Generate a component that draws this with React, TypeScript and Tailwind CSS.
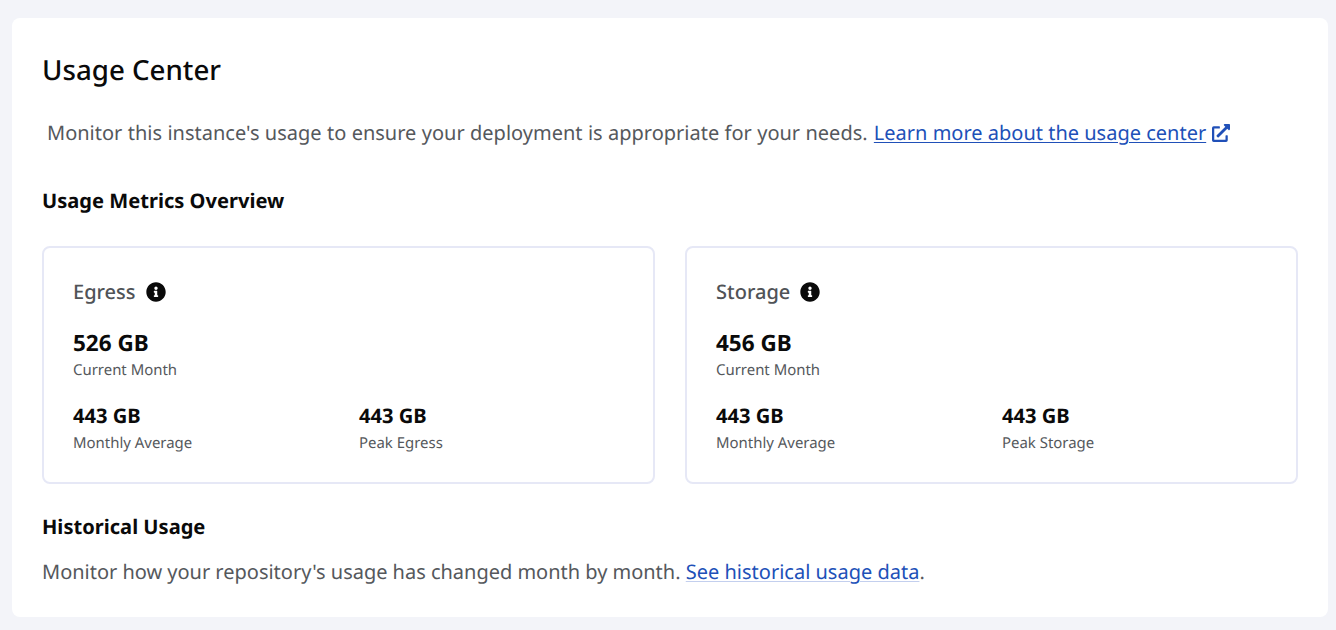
import { FaInfoCircle, FaExternalLinkAlt } from "react-icons/fa";

function Stat({ value, label, big, wide }: { value: string; label: string; big?: boolean; wide?: boolean }) {
  return (
    <div className="flex flex-col">
      <div className={big ? "text-[22.5px] leading-[30px] font-bold text-[#0a0a0a]" : "text-[20.1px] leading-[28px] font-bold text-[#0a0a0a]"}>{value}</div>
      <div className={wide ? "text-[14.95px] leading-[26px] text-[#55585c]" : "text-[14.95px] leading-[24px] text-[#55585c]"}>{label}</div>
    </div>
  );
}

function Card({ title, current, peak }: { title: string; current: string; peak: string }) {
  return (
    <div className="flex-1 h-[238px] rounded-lg border-2 border-[#e6e8f6] pl-[29px] pr-6 pt-[29px]">
      <div className="flex items-center gap-[10px] h-[30px]">
        <span className="text-[20px] leading-[30px] font-medium text-[#505357]">{title}</span>
        <FaInfoCircle className="w-[20px] h-[20px] text-[#0a0a0a]" />
      </div>
      <div className="mt-[21px]">
        <Stat value={current} label="Current Month" big />
      </div>
      <div className="mt-[20px] grid grid-cols-[286px_1fr]">
        <Stat value="443 GB" label="Monthly Average" wide />
        <Stat value="443 GB" label={peak} wide />
      </div>
    </div>
  );
}

export default function App() {
  return (
    <div className="min-h-[630px] bg-[#f3f4f9] pl-3 pr-2 pt-[18px] pb-[13px] font-['Noto_Sans','Open_Sans',sans-serif] [text-rendering:geometricPrecision]">
      <div className="h-[599px] rounded-lg bg-white px-[30px] pt-[32px]">
        <h1 className="text-[27.7px] leading-[40px] font-medium text-[#0a0a0a]">Usage Center</h1>
        <p className="mt-[29px] pl-[5px] text-[20px] leading-[28px] text-[#55585c]">
          <span className="[word-spacing:0.17px]">Monitor this instance's usage to ensure your deployment is appropriate for your needs.</span>{" "}
          <a className="ml-[1px] text-[#2050b8] underline decoration-1 underline-offset-2 decoration-[#2050b8]" href="#">
            Learn more about the usage center
            <FaExternalLinkAlt className="inline-block ml-[6px] w-[18px] h-[18px] align-[-2px]" />
          </a>
        </p>
        <h2 className="mt-[39px] text-[20.1px] leading-[30px] font-bold text-[#0a0a0a]">Usage Metrics Overview</h2>
        <div className="mt-[30px] flex gap-[30px]">
          <Card title="Egress" current="526 GB" peak="Peak Egress" />
          <Card title="Storage" current="456 GB" peak="Peak Storage" />
        </div>
        <h2 className="mt-[28px] text-[20.1px] leading-[30px] font-bold text-[#0a0a0a]">Historical Usage</h2>
        <p className="mt-[16px] text-[20px] leading-[28px] text-[#55585c]">
          <span className="[word-spacing:-0.1px]">Monitor how your repository's usage has changed month by month.</span>{" "}
          <a className="text-[#2050b8] underline decoration-1 underline-offset-2 decoration-[#c3cfee]" href="#">See historical usage data</a>.
        </p>
      </div>
    </div>
  );
}
